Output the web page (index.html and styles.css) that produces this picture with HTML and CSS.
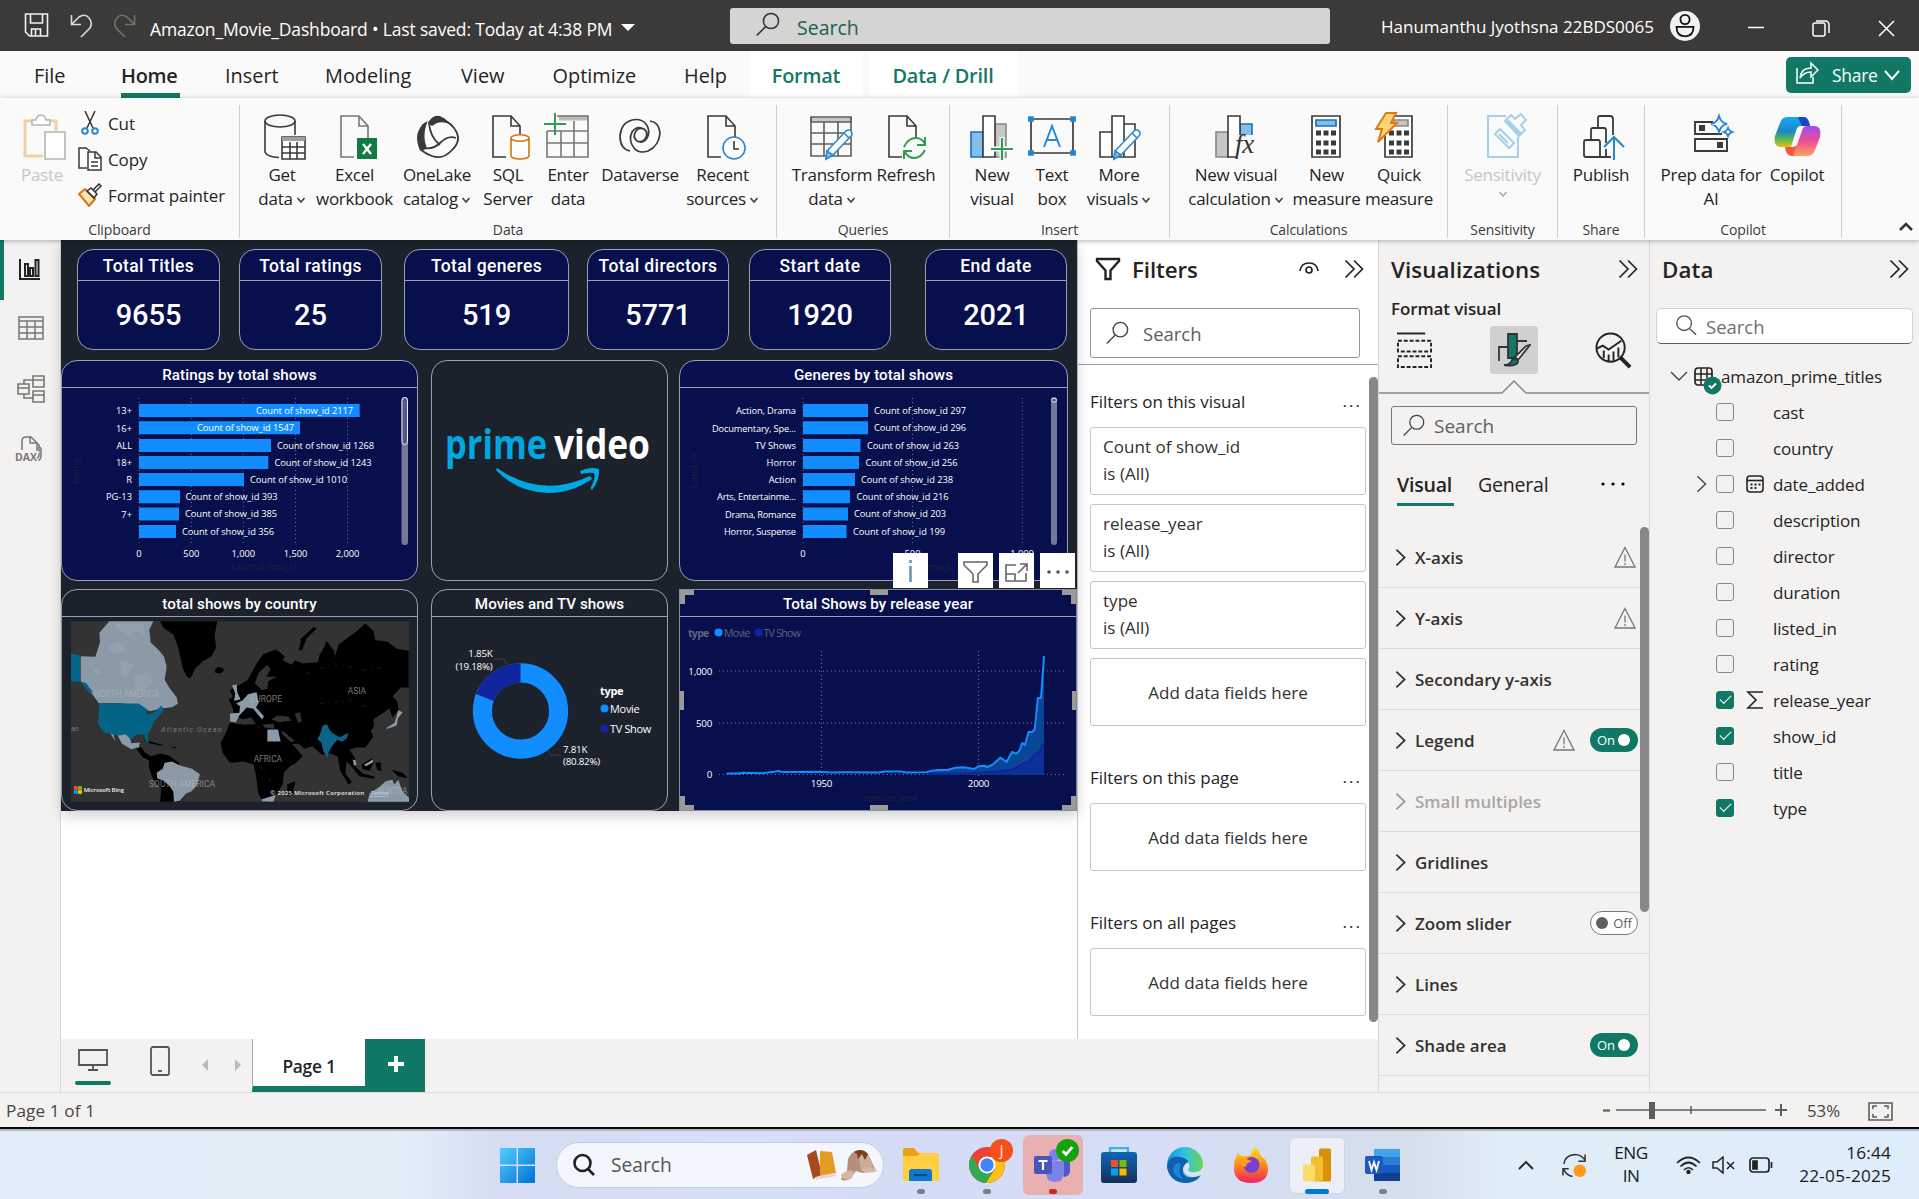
FILE: index.html
```html
<!DOCTYPE html>
<html lang="en">
<head>
<meta charset="utf-8">
<title>Amazon_Movie_Dashboard</title>
<link rel="stylesheet" href="styles.css">
</head>
<body>
<svg class="defs" width="0" height="0">
  <symbol id="mag" viewBox="0 0 24 24"><circle cx="15" cy="9" r="7.6"/><path d="M9.6 14.6L.8 23.4"/></symbol>
  <symbol id="mag-r" viewBox="0 0 24 24"><circle cx="10" cy="10" r="8"/><path d="M16 16l7 6.5"/></symbol>
  <symbol id="dbl" viewBox="0 0 20 20"><path d="M1.5 1.5L10 10l-8.500 8.500M10 1.500L18.500 10 10 18.500"/></symbol>
  <symbol id="chev" viewBox="0 0 12 20"><path d="M1.500 1.500L10.500 10l-9 8.500"/></symbol>
  <symbol id="warn" viewBox="0 0 22 22"><path d="M11 1.500L21 21H1zM11 8.500v7M11 17v2"/></symbol>
  <symbol id="down" viewBox="0 0 10 10"><path d="M1.500 3l3.500 4 3.500-4"/></symbol>
  <symbol id="sheet" viewBox="0 0 44 50"><path d="M20 44H7V3h18l9 10v13M25 3v10h9"/></symbol>
  <symbol id="pencil" viewBox="0 0 30 34"><path d="M3 24L22 4q3-2 5 0 2 3 0 5L9 28l-7 4z" fill="#fff"/><path d="M3 24l6 4-7 4z" fill="#83beec"/><path d="M20 6l5 5"/></symbol>
</svg>

<header class="titlebar">
  <svg class="qa" viewBox="0 0 120 30" fill="none" stroke="#f3f2f1" stroke-width="1.600"><path d="M1.500 4h22v22h-18l-4-4zM6.500 4v9h12V4M7.500 26v-7h9v7M11.500 19v7"/><path d="M47.500 5v9.500H57M48 14l7-7q6-4 10 1t1 10l-9 9" stroke="#dddcda"/><path d="M110.500 5v9.500H101M110 14l-7-7q-6-4-10 1t-1 10l9 9" stroke="#73726f"/></svg>
  <span class="doc">Amazon_Movie_Dashboard • Last saved: Today at 4:38 PM</span>
  <i class="tri"></i>
  <div class="topsearch"><svg fill="none" stroke="#333" stroke-width="1.500"><use href="#mag"/></svg><span>Search</span></div>
  <span class="user">Hanumanthu Jyothsna 22BDS0065</span>
  <svg class="avatar" viewBox="0 0 30 30"><circle cx="15" cy="15" r="15" fill="#f3f2f1"/><g fill="none" stroke="#111" stroke-width="1.800"><circle cx="15" cy="8.500" r="4.600"/><path d="M6.500 15.800h17q0 9.500-8.500 9.500t-8.500-9.500z"/></g></svg>
  <svg class="win" viewBox="0 0 150 20" fill="none" stroke="#fff" stroke-width="1.500"><path d="M1 9.500h16M132 3l15 15M147 3l-15 15"/><rect x="66" y="5" width="12" height="13" rx="2"/><path d="M69 3h9q4 0 4 4v8"/></svg>
</header>

<nav class="tabs">
  <span class="t-file">File</span><span class="t-home on">Home</span><span class="t-insert">Insert</span><span class="t-model">Modeling</span><span class="t-view">View</span><span class="t-opt">Optimize</span><span class="t-help">Help</span><span class="ctx t-fmt">Format</span><span class="ctx t-drill">Data / Drill</span>
  <button class="share"><svg viewBox="0 0 24 24" fill="none" stroke="#fff" stroke-width="1.500"><path d="M2 7v15h16v-6M5 17q1-10 11-10V2l7 7-7 7v-5q-7 0-11 6z"/></svg>Share<svg class="sd" viewBox="0 0 10 10" fill="none" stroke="#fff"><use href="#down"/></svg></button>
</nav>

<section class="ribbon">
  <div class="group g-clip">
    <div class="items">
      <div class="cmd off"><svg viewBox="-1 0 44 50" fill="none" stroke-width="1.600"><path d="M14 8H4v35h18M26 8h9v10" stroke="#f3cfa5" stroke-width="3"/><path d="M11 12V7h4q1-5 5-5t5 5h4v5z" fill="#fff" stroke="#b5b5b5"/><path d="M24 19h20v27H24z" fill="#fff" stroke="#b5b5b5"/></svg><b>Paste</b></div>
      <div class="mini">
        <span><svg viewBox="0 0 24 24" fill="none" stroke="#333" stroke-width="1.500"><path d="M7 0l8 17M17 0L9 17"/><g stroke="#2b88c8" stroke-width="2"><circle cx="7" cy="20" r="2.800"/><circle cx="17" cy="20" r="2.800"/></g></svg>Cut</span>
        <span><svg viewBox="0 0 24 24" fill="#fff" stroke="#3b3a39" stroke-width="1.500"><path d="M9 21H1V1h7l4 3"/><path d="M10 5h8l5 5v13H10zM17 5v6h6M13 15h7M13 19h7"/></svg>Copy</span>
        <span><svg viewBox="0 0 24 24" fill="none" stroke="#333" stroke-width="1.500"><path d="M1 11l6-5 10 10-6 7z" fill="#fbe3b0" stroke="#d9730d" stroke-width="2"/><path d="M9 8l4-3 6 6-3 4zM15 7l6-6 2 2-6 6"/></svg>Format painter</span>
      </div>
    </div><h6>Clipboard</h6>
  </div>
  <div class="group g-data">
    <div class="items">
      <div class="cmd"><svg viewBox="-2 0 44 50" fill="none" stroke="#3b3a39" stroke-width="1.600"><ellipse cx="18" cy="8" rx="15" ry="6"/><path d="M3 8v31q2 5 14 5.500M33 8v14"/><path d="M20 24h23v22H20z" fill="#fff"/><path d="M20 26h23" stroke="#a19f9d" stroke-width="4"/><path d="M20 34h23M20 40h23M28 29v17M35 29v17"/></svg><b>Get</b><b>data<svg class="dn"><use href="#down"/></svg></b></div>
      <div class="cmd"><svg viewBox="-1 0 44 50" fill="none" stroke="#797775" stroke-width="1.600"><use href="#sheet"/><path d="M23 25h20v21H23z" fill="#107c41" stroke="none"/><path d="M29 31l8 10M37 31l-8 10" stroke="#fff" stroke-width="2.400"/></svg><b>Excel</b><b>workbook</b></div>
      <div class="cmd"><svg viewBox="0 0 44 50" fill="none" stroke="#3b3a39" stroke-width="1.800"><path d="M14 10q7-12 18-1-9-2-15 3zM8 12q-9 11-2 25l5-2Q6 24 11 10z" fill="#3b3a39"/><path d="M14 9Q30 3 39 15t-2 22q-9 10-20 6T5 34q12 4 20-4t16-5M14 10q1 14 11 22M10 12Q5 24 9 35"/></svg><b>OneLake</b><b>catalog<svg class="dn"><use href="#down"/></svg></b></div>
      <div class="cmd"><svg viewBox="0 0 44 50" fill="none" stroke="#3b3a39" stroke-width="1.600"><use href="#sheet"/><g stroke="#d9730d" fill="#fff"><path d="M25 25v18q1 3 9 3t9-3V25"/><ellipse cx="34" cy="25" rx="9" ry="3.200"/></g></svg><b>SQL</b><b>Server</b></div>
      <div class="cmd"><svg viewBox="0 0 44 50" fill="none" stroke="#797775" stroke-width="1.600"><path d="M13 5h29" stroke="#bdbbb9" stroke-width="5"/><path d="M11 3h31v41H1V18M1 30h41M1 18h41M15 18v26M28 8v36M1 44h41V3"/><path d="M9 0v22M-2 11h22" stroke="#2f9e50" stroke-width="2"/></svg><b>Enter</b><b>data</b></div>
      <div class="cmd"><svg viewBox="0 -1 44 50" fill="none" stroke="#3b3a39" stroke-width="1.700"><path d="M12 37Q2 35 2 22 3 9 14 6q9-2 14 4 5 7 1 14-4 6-10 3-5-4-1-10 3-4 8-2M32 7q9 1 10 12-1 13-12 18-9 3-14-3-6-8-2-16 5-7 12-3 5 4 1 10-3 4-8 2"/></svg><b>Dataverse</b></div>
      <div class="cmd"><svg viewBox="0 0 44 50" fill="none" stroke="#3b3a39" stroke-width="1.600"><use href="#sheet"/><circle cx="33" cy="35" r="11" fill="#fff" stroke="#2b88d8"/><path d="M33 28v8h5"/></svg><b>Recent</b><b>sources<svg class="dn"><use href="#down"/></svg></b></div>
    </div><h6>Data</h6>
  </div>
  <div class="group g-query">
    <div class="items">
      <div class="cmd"><svg viewBox="0 0 44 50" fill="none" stroke="#605e5c" stroke-width="1.600"><path d="M1 4h40v5H1z" fill="#c8c6c4"/><path d="M41 4v39H1V4M1 20h40M1 31h40M14 9v34M28 9v34"/><svg x="14" y="14" width="30" height="34" stroke="#2b88d8"><use href="#pencil"/></svg></svg><b>Transform</b><b>data<svg class="dn"><use href="#down"/></svg></b></div>
      <div class="cmd"><svg viewBox="2 0 44 50" fill="none" stroke="#3b3a39" stroke-width="1.600"><use href="#sheet"/><path d="M20 26h24v22H20z" fill="#fafafa" stroke="none"/><path d="M22 34q4-9 12-9 6 0 9 6M43 24v8h-8M43 37q-4 8-11 8-6 0-9-6M22 46v-8h8" stroke="#2f9e50" stroke-width="2"/></svg><b>Refresh</b></div>
    </div><h6>Queries</h6>
  </div>
  <div class="group g-ins">
    <div class="items">
      <div class="cmd"><svg viewBox="1 0 44 50" fill="none" stroke="#3b3a39" stroke-width="1.600"><path d="M2 19h12v25H2z" fill="#83beec" stroke="#1a6fb8"/><path d="M26 11h11v33H26z" fill="#c8c6c4" stroke="#8a8886"/><path d="M14 3h12v41H14z" fill="#fff"/><path d="M33 24v24M21 36h23" stroke="#fafafa" stroke-width="5"/><path d="M33 25v22M22 36h22" stroke="#2f9e50" stroke-width="2.200"/></svg><b>New</b><b>visual</b></div>
      <div class="cmd"><svg class="wide" viewBox="0 0 48 50" fill="none" stroke="#3b3a39" stroke-width="1.700"><path d="M3 6h42v34H3z"/><path d="M16 34l8-21 8 21M19 27h10" stroke="#2b88d8" stroke-width="2"/><path d="M1 4h4v4H1zM43 4h4v4h-4zM1 38h4v4H1zM43 38h4v4h-4z" fill="#1f86d0" stroke="#1f86d0"/></svg><b>Text</b><b>box</b></div>
      <div class="cmd"><svg viewBox="-1 0 44 50" fill="#fff" stroke="#3b3a39" stroke-width="1.600"><path d="M2 19h12v25H2zM26 11h11v33H26zM14 3h12v41H14z"/><svg x="14" y="14" width="30" height="34" stroke="#2b88d8"><use href="#pencil"/></svg></svg><b>More</b><b>visuals<svg class="dn"><use href="#down"/></svg></b></div>
    </div><h6>Insert</h6>
  </div>
  <div class="group g-calc">
    <div class="items">
      <div class="cmd"><svg viewBox="0 0 44 50" fill="none" stroke="#3b3a39" stroke-width="1.600"><path d="M2 19h12v25H2z" fill="#c8c6c4" stroke="#8a8886"/><path d="M26 11h12v14H26z" fill="#83beec" stroke="#1a6fb8"/><path d="M14 3h12v41H14z" fill="#fff"/><path d="M22 22h22v26H22z" fill="#fafafa" stroke="none"/><text x="21" y="40" class="fx">fx</text></svg><b>New visual</b><b>calculation<svg class="dn"><use href="#down"/></svg></b></div>
      <div class="cmd"><svg viewBox="0 0 44 50" fill="#fff" stroke="#3b3a39" stroke-width="1.700"><path d="M8 3h28v41H8z"/><path d="M12 7h20v6H12z" fill="#83beec" stroke="#1a6fb8"/><path d="M12 20h20M12 30h20M12 39h20" stroke-width="5" stroke-dasharray="5 2.500"/></svg><b>New</b><b>measure</b></div>
      <div class="cmd"><svg viewBox="3 0 44 50" fill="#fff" stroke="#3b3a39" stroke-width="1.700"><path d="M11 3h27v41H11z"/><path d="M20 7h14v6H20z" fill="#c8c6c4" stroke="#8a8886"/><path d="M15 20h20M15 30h20M15 39h20" stroke-width="5" stroke-dasharray="5 2.500"/><path d="M12 0h10l-5 10h6L4 29l4-13H2z" fill="#fbd77a" stroke="#e07a10" stroke-width="2"/></svg><b>Quick</b><b>measure</b></div>
    </div><h6>Calculations</h6>
  </div>
  <div class="group g-sens">
    <div class="items">
      <div class="cmd off"><svg viewBox="-2 0 44 50" fill="#fafafa" stroke="#a6d0e9" stroke-width="2"><path d="M23 3H5v41h30V24"/><path d="M12 21l5-5 14 14-5 5zM16 21l9 9M22 8l6-6 4 4 6-5 5 6-5 5 4 5-6 6z"/><path d="M24 8l13 13" stroke-width="4"/></svg><b>Sensitivity</b><b><svg class="dn"><use href="#down"/></svg></b></div>
    </div><h6>Sensitivity</h6>
  </div>
  <div class="group g-share">
    <div class="items">
      <div class="cmd"><svg viewBox="-1 0 44 50" fill="none" stroke="#3b3a39" stroke-width="1.800"><path d="M31 44H6q-2 0-2-2V29q0-2 2-2h12q2 0 2 2v15M11 26V17q0-2 2-2h11q2 0 2 2v13M18 14V5q0-2 2-2h10q3 0 3 3v16M26 36v8"/><path d="M34 47V24M24 34l10-10 10 10" stroke="#2488c8" stroke-width="2"/></svg><b>Publish</b></div>
    </div><h6>Share</h6>
  </div>
  <div class="group g-cop">
    <div class="items">
      <div class="cmd"><svg viewBox="-2 0 44 50" fill="none" stroke="#3b3a39" stroke-width="1.900"><path d="M22 9H4v12h27M4 26h32v12H4z"/><path d="M8 12h6v6H8zM26 29h6v6h-6z" fill="#3b3a39" stroke="none"/><path d="M28 3q2 7 8 8-6 1-8 8-2-7-8-8 6-1 8-8zM37 15q1 3 4 4-3 1-4 4-1-3-4-4 3-1 4-4z" stroke="#2b88d8"/></svg><b>Prep data for</b><b>AI</b></div>
      <div class="cmd"><svg class="wide" viewBox="0 0 48 50"><defs><linearGradient id="c1" x2="0" y2="1"><stop offset="0" stop-color="#16a9f2"/><stop offset=".45" stop-color="#1b86c8"/><stop offset=".7" stop-color="#58b755"/><stop offset="1" stop-color="#ffc10a"/></linearGradient><linearGradient id="c2" x2="0" y2="1"><stop offset="0" stop-color="#a04cf0"/><stop offset=".5" stop-color="#ee4f97"/><stop offset="1" stop-color="#ffa05c"/></linearGradient></defs><path d="M14 4h17q4 0 6 8l-9 1q-4 0-5 5l-5 16q-1 3-6 0H8q-8 0-6-11l5-13q2-6 7-6z" fill="url(#c1)"/><path d="M25 4h6q4 0 6 9h-8z" fill="#1846c4"/><path d="M34 43H18q-5 0-6-9h9q3 0 4-5l5-14q1-2 4-2h7q8 0 6 11l-5 13q-2 6-8 6z" fill="url(#c2)"/><path d="M12 34h8q3 0 4-3l-4 12q-6 0-8-9z" fill="#f0593a"/></svg><b>Copilot</b></div>
    </div><h6>Copilot</h6>
  </div>
  <svg class="collapse" viewBox="0 0 14 10" fill="none" stroke="#333" stroke-width="2.500"><path d="M1 8l6-6 6 6"/></svg>
</section>

<main>
  <aside class="rail">
    <div class="sel"><svg viewBox="-1 0 28 28" fill="none" stroke="#222" stroke-width="2"><path d="M3 3v20h20M8 20V8h3v12zM13 20v-8h3v8zM18.500 20V4h3v16z"/></svg></div>
    <div><svg viewBox="-1 2 28 28" fill="none" stroke="#797775" stroke-width="1.500"><path d="M2 3h24v22H2zM2 7h24M2 13h24M2 19h24M10 7v18M18 7v18"/></svg></div>
    <div><svg viewBox="-1 1 28 28" fill="none" stroke="#797775" stroke-width="1.600"><path d="M16 1h11v11H16zM16 16h11v11H16zM16 5h11M16 20h11M1 9h11v10H1zM1 13h11M7 9V5h9M7 19v4h9"/></svg></div>
    <div><svg viewBox="1 1 28 28" fill="none" stroke="#797775" stroke-width="1.500"><path d="M7 15V6q0-4 4-4h5l6 6v8M15 2v6h7M22 8l2 2v10q0 3-3 4M25 12l1 2v7q0 4-4 5"/><text x="0" y="26" class="dax">DAX</text></svg></div>
  </aside>

  <div class="center">
    <div class="workspace">
      <div class="report">
        <div class="canvas">
          <div class="kpis">
            <div class="kpi"><h3>Total Titles</h3><p>9655</p></div>
            <div class="kpi"><h3>Total ratings</h3><p>25</p></div>
            <div class="kpi"><h3>Total generes</h3><p>519</p></div>
            <div class="kpi"><h3>Total directors</h3><p>5771</p></div>
            <div class="kpi"><h3>Start date</h3><p>1920</p></div>
            <div class="kpi"><h3>End date</h3><p>2021</p></div>
          </div>
          <div class="visuals">
            <div class="panel navy"><h4>Ratings by total shows</h4>
              <svg class="chart" viewBox="62 388 355 192">
                <g class="grid"><path d="M139 398v148M191.300 398v148M243.300 398v148M295.500 398v148M347.500 398v148"/></g>
                <g class="bars"><path d="M139 404h220.700v13H139zM139 421.300h161v13H139zM139 439h132v13H139zM139 456h129.300v13H139zM139 473h105v13H139zM139 490.300h41v13H139zM139 507.500h40v13H139zM139 525h37v13H139z"/></g>
                <g class="end"><text x="132" y="414">13+</text><text x="132" y="432">16+</text><text x="132" y="449">ALL</text><text x="132" y="466">18+</text><text x="132" y="483">R</text><text x="132" y="500">PG-13</text><text x="132" y="518">7+</text></g>
                <g><text x="256" y="414" textLength="97">Count of show_id 2117</text><text x="197" y="431" textLength="97">Count of show_id 1547</text><text x="277" y="449" textLength="97">Count of show_id 1268</text><text x="274.500" y="466" textLength="97">Count of show_id 1243</text><text x="250" y="483" textLength="97">Count of show_id 1010</text><text x="185.500" y="500" textLength="92">Count of show_id 393</text><text x="185" y="517" textLength="92">Count of show_id 385</text><text x="182" y="535" textLength="92">Count of show_id 356</text></g>
                <g class="mid"><text x="139" y="557">0</text><text x="191.300" y="557">500</text><text x="243.300" y="557">1,000</text><text x="295.500" y="557">1,500</text><text x="347.500" y="557">2,000</text><text x="264" y="570" textLength="65" class="dim">Count of show_id</text><text transform="translate(79 471) rotate(-90)" class="dim">rating</text></g>
                <rect x="401.500" y="397" width="6.500" height="148" rx="3" fill="#74799b"/><rect x="402" y="397.500" width="5.500" height="47" rx="3" fill="#545a86" stroke="#fff" stroke-width=".9"/>
              </svg></div>
            <div class="panel logo"><svg viewBox="432 361 235 219">
                <text x="445" y="459" class="brand blue" textLength="102" lengthAdjust="spacingAndGlyphs">prime</text><text x="554" y="459" class="brand" textLength="96" lengthAdjust="spacingAndGlyphs">video</text>
                <path d="M497 468q44 31 93 8l2 3q-20 14-44 14-32-1-52-23z" fill="#00a8e1"/><path d="M580 471q10-5 19-2 1 11-7 21-2-1-1-3 5-9 3-14-5-1-13 1z" fill="#00a8e1"/></svg></div>
            <div class="panel navy"><h4>Generes by total shows</h4>
              <svg class="chart" viewBox="680 388 387 192">
                <g class="grid"><path d="M803 398v148M912.500 398v148M1022.300 398v148"/></g>
                <g class="bars"><path d="M803 404h65v13h-65zM803 421.300h65v13h-65zM803 439h57.500v13H803zM803 456h56v13h-56zM803 473h52v13h-52zM803 490.300h47v13h-47zM803 507.500h45v13h-45zM803 525h43.500v13H803z"/></g>
                <g class="end"><text x="796" y="414" textLength="60">Action, Drama</text><text x="796" y="432" textLength="84">Documentary, Spe...</text><text x="796" y="449" textLength="41">TV Shows</text><text x="796" y="466">Horror</text><text x="796" y="483">Action</text><text x="796" y="500" textLength="79">Arts, Entertainme...</text><text x="796" y="518" textLength="71">Drama, Romance</text><text x="796" y="535" textLength="72">Horror, Suspense</text></g>
                <g><text x="874" y="414" textLength="92">Count of show_id 297</text><text x="874" y="431" textLength="92">Count of show_id 296</text><text x="867" y="449" textLength="92">Count of show_id 263</text><text x="865.500" y="466" textLength="92">Count of show_id 256</text><text x="861" y="483" textLength="92">Count of show_id 238</text><text x="856.500" y="500" textLength="92">Count of show_id 216</text><text x="854" y="517" textLength="92">Count of show_id 203</text><text x="853" y="535" textLength="92">Count of show_id 199</text></g>
                <g class="mid"><text x="803" y="557">0</text><text x="912.500" y="557">500</text><text x="1022" y="557">1,000</text><text x="921" y="570" textLength="65" class="dim">Count of show_id</text><text transform="translate(697 471) rotate(-90)" class="dim">listed_in</text></g>
                <rect x="1051" y="397" width="6" height="148" rx="3" fill="#74799b"/><rect x="1051.500" y="398.500" width="5" height="3.500" rx="1.700" fill="#545a86" stroke="#fff" stroke-width=".8"/>
              </svg></div>
            <div class="panel"><h4>total shows by country</h4>
              <svg class="map" viewBox="213 123 1014 542">
                <path fill="#333333" d="M213 123h1014v542H213z"/>
                <g fill="#000">
                  <path d="M480 123h172l-8 40 4 40-14 26-26 14-22 22-14 28-10-2-14-26-8-40-6-26-14-36-30-20z"/>
                  <path d="M645 268l10-8 14 4 3 8-12 8-14-2z"/>
                  <path d="M408 505l16-3 10 14 18 12 30-8 24 6 16 12 14 8 2 20 10 90-10 9h-58l4-40-26-30-12-36 2-18-20-10z"/>
                  <path d="M430 478l34 10 24 6-4 3-34-8zM512 500l18 1-6 4z"/>
                  <path d="M690 428l28 4 18-4 24 4 22 14 20 0 32 4 10 34 16 32 34-2-16 36-26 26-4 36-24 40-14 12-22 2-14-30-6-50-8-34-30-8-40 4-22-30-6-30 16-30z"/>
                  <path d="M742 300l28-50 20-28 38-14 26 20-6 12 26 14 12-14 22 10 46-4 4-20 14-24 8-20 22 30 2 18 12-36 28-22 22-16 30-26 24 22 6 28 36 4 28 22 36 6v110h-24l-24 26 14 16 4 26-18 22-10-28-18 14-30 20 2 20-10 14 8 18-24 32-28 0-20 6 18 28-8 24-18-16-4 36 20 26-10 8-26-44-6-40-22-10-26 4-30-26-22 8-20-16-18 2 12 12 20 24-22 22-32 16-10-20-26-46-8-26-28-2-8-16 6-14-22-8-18 6-14-24-22-6-6-28-12-24 12-8-8-20z"/>
                  <path d="M1038 540l12 2 38 38 36 10-2 6-44-8zM1086 552l30-18 6 12-14 26-22-6zM1126 548l16-2 2 26-12-2zM1174 568l34 10 16 16-30-6z"/>
                  <path d="M896 210l8-36 38-34 8 6-30 28-14 36zM862 612l24-8-8 36-16 8z"/>
                </g>
                <g fill="#333333"><path d="M764 310l12-32 26-24 10 12-12 24 30 0-26 14-2 22-16 4-12-12zM814 418l18-12 34 4 8 12-36 4zM884 400l16-4 6 28-12 4zM786 434l34-4 4 16-30-4zM842 450l14 8 28 24-10 4-26-22zM712 420l42-8 14 20-40 2z"/></g>
                <g fill="none" stroke="#151515" stroke-width="4" stroke-dasharray="10 14 4 16"><path d="M920 280l80-30 90 20 60-10M960 370l90-10 70 30M780 560l30 40-10 30"/></g>
                <g fill="#8b9aa6">
                  <path d="M328 123h132l-12 26 4 38 22 20 18 22 8 30-6 40 14 24 22 28 4 20-18 10-34 4-32 8-22-10-62-14-70 0-16-22-20-26-18-16V228l44 2 14-44-2-28z"/>
                  <path d="M322 445l46 4 20 20 6 20 26-2-4 14-22 6-28-16-16-30-14-14 10 36z"/>
                  <path d="M470 578l18-12 6-18 22-4 24 12 36 10 24 16-10 34-16 18-16 6-18 22-18 3-2-30-12-18-18-16-18-6z"/>
                  <path d="M690 400l28-2 2-20-12-8 20-10 16-18 26-6 6 32-8 14 24 26-6 10-26-32-20-4-22 24-10 20-18-2z"/>
                  <path d="M696 316l14-4 2 24 10 22-20 4 4-22zM802 448h32l8 36h-40zM1158 444l26-16 6-20 4-18 14 6-14 18-4 22-28 10zM1058 538l8 2 4 14-8 2zM1092 554l26-16 2 8-22 12zM784 658l44-14-8 21-34-1zM1103 665l6-26 28-18 20-18 20-4 6 14 12-14 12 34 20 20v12z"/>
                </g>
                <g fill="#9aacb8" opacity=".4"><path d="M340 130l90 0 4 34-30-14-12 24-30-18zM320 200l40-18 22 30-38 10zM400 290l40-14 20 28-26 30-30-8zM360 240l40 14-22 40-14-14zM270 250l40 30-20 6z"/></g>
                <path fill="#056488" d="M213 219l28 8v76l18 6 20 28-12 0-26-32-28-2zM298 370h118l24 16 0 18 24-8 20-20 6 10-4 12-24 26-10 24-10 14 4 26-8-4-6-22-24 2-14 14-18-16-18 4-44-8-20-26z"/>
                <path fill="#0d6388" d="M968 436l14-3 6 16 12 12 20 10 26-14-6 18-14 10-14-6-12 14-12 18-6 22-12-20-6-26-12-10 8-14z"/>
                <g class="geo"><text x="282" y="351" textLength="196">NORTH AMERICA</text><text x="751" y="365" textLength="95">EUROPE</text><text x="1043" y="342" textLength="55">ASIA</text><text x="761" y="546" textLength="85">AFRICA</text><text x="447" y="622" textLength="198">SOUTH AMERICA</text><text x="1132" y="641" textLength="90">AUSTRA</text></g>
                <g class="sea"><text x="483" y="457" textLength="182">Atlantic Ocean</text><text x="213" y="453">an</text></g>
                <path fill="#f25022" d="M222 618h11v11h-11z"/><path fill="#7fba00" d="M234 618h12v11h-12z"/><path fill="#00a4ef" d="M222 630h11v11h-11z"/><path fill="#ffb900" d="M234 630h12v11h-12z"/>
                <text x="251" y="637" class="ms" textLength="121">Microsoft Bing</text><text x="811" y="645" class="ms" textLength="281">© 2025 Microsoft Corporation</text><text x="1112" y="645" class="ms terms" textLength="54">Terms</text>
              </svg></div>
            <div class="panel"><h4>Movies and TV shows</h4>
              <svg class="chart" viewBox="432 617 235 193">
                <circle cx="520.500" cy="711" r="38.100" fill="none" stroke="#118dff" stroke-width="19.100"/>
                <path d="M520.500 672.900A38.100 38.100 0 0 0 484.900 697.500" fill="none" stroke="#12239e" stroke-width="19.100"/>
                <path d="M494 659h10l2 5M548 751l3 4h10" fill="none" stroke="#3b414b"/>
                <g class="big"><g class="end"><text x="492.500" y="657">1.85K</text><text x="492.500" y="670" textLength="37">(19.18%)</text></g><text x="563" y="753">7.81K</text><text x="563" y="765" textLength="37">(80.82%)</text></g>
                <g class="leg"><text x="600" y="695" class="b">type</text><text x="610" y="713">Movie</text><text x="610" y="733" textLength="41">TV Show</text></g>
                <circle cx="604.500" cy="708.500" r="4" fill="#118dff"/><circle cx="604.500" cy="728.500" r="4" fill="#12239e"/>
              </svg></div>
            <div class="panel navy picked"><h4>Total Shows by release year</h4>
              <svg class="chart" viewBox="680 617 396 193">
                <g class="grid"><path d="M821.500 651v125M978.500 651v125M719 671h346M719 723h346M719 774.500h346"/></g>
                <path d="M926 774.500L938.500 770H947L955 767.700 964 767.300 974 769 978.500 766.300 984 765.700 988 767 993 764.300 1000.300 757.700 1006.600 762 1012 752 1016 753.700 1019.300 751 1022.200 743 1025 745 1028.500 732H1032.300L1034.800 729 1037.800 698H1041L1044 656V774.500z" fill="#0b4596"/>
                <path d="M963 774.500L997 771.500 1010 770 1018.400 766.700 1022.600 764 1028.500 762 1034 755 1040 751.500 1044 742V774.500z" fill="#0d3199"/>
                <path d="M928 774L963 773.500 980 772.500 997 771.500 1010 770 1018.400 766.700 1022.600 764 1028.500 762 1034 755 1040 751.500 1044 742" fill="none" stroke="#12239e" stroke-width="2"/>
                <path d="M726.500 773.500L740 773.500 743 772.800 762 773.200 774 771.700 778.500 771 782 772 820 771.700 830 772.500 845 772.300 879 772.500 885 771.500 901 771.500 906 772.500 926 772.300 932 770.800 938.500 770H947L955.300 767.700 963.700 767.300 974 769 978.500 766.300 984 765.700 987.700 767 993 764.300 1000.300 757.700 1006.600 762 1012 752 1016 753.700 1019.300 751 1022.200 743 1025 745 1028.500 732H1032.300L1034.800 729 1037.800 698H1041L1044 656" fill="none" stroke="#118dff" stroke-width="2" stroke-linejoin="round"/>
                <g class="big"><g class="end"><text x="712" y="674.500">1,000</text><text x="712" y="726.500">500</text><text x="712" y="778">0</text></g><g class="mid"><text x="821.500" y="787">1950</text><text x="978.500" y="787">2000</text><text x="891" y="801" class="dim">release_year</text></g></g>
                <g class="leg grey"><text x="688" y="636.500" class="b" textLength="21">type</text><text x="724" y="636.500" textLength="26">Movie</text><text x="763.500" y="636.500" textLength="37">TV Show</text></g>
                <circle cx="718.500" cy="632.500" r="4" fill="#118dff"/><circle cx="758.500" cy="632.500" r="4" fill="#12239e"/>
              </svg>
              <svg class="handles" viewBox="0 0 398 222"><path d="M0 0h15v6H6v9H0zM398 0h-15v6h9v9h6zM0 222h15v-6H6v-9H0zM398 222h-15v-6h9v-9h6zM191 0h18v6h-18zM191 216h18v6h-18zM0 102h5v19H0zM393 102h5v19h-5z" fill="#9a9a9a"/></svg>
            </div>
          </div>
          <div class="vtools">
            <i class="info"><svg viewBox="0 0 35 35" stroke="#6a93c4" stroke-width="2.600"><path d="M17.500 7v3M17.500 13v16"/></svg></i>
            <i><svg viewBox="0 0 35 35" fill="none" stroke="#666" stroke-width="1.600"><path d="M6 9h23v3l-9 9v8h-5v-8l-9-9z"/></svg></i>
            <i><svg viewBox="0 0 35 35" fill="none" stroke="#666" stroke-width="1.600"><path d="M17 12H7v16h20v-8M7 21h9v7M19 20l9-9M21 11h7v7"/></svg></i>
            <i><svg viewBox="0 0 35 35" fill="#555"><circle cx="9" cy="19" r="1.800"/><circle cx="18" cy="19" r="1.800"/><circle cx="27" cy="19" r="1.800"/></svg></i>
          </div>
        </div>
      </div>

      <aside class="filters">
        <div class="fhead"><svg class="funnel" viewBox="0 0 26 24" fill="none" stroke="#252423" stroke-width="2.400"><path d="M2 2h22v2l-8.500 9.500V22h-5v-8.500L2 4z"/></svg><h2>Filters</h2><svg class="eye" viewBox="0 0 20 14" fill="none" stroke="#252423" stroke-width="1.700"><path d="M1 10Q2 2 10 2t9 8"/><circle cx="10" cy="9" r="3"/></svg><svg class="dbl"><use href="#dbl"/></svg></div>
        <div class="box fsearch"><svg><use href="#mag"/></svg>Search</div>
        <hr>
        <div class="flist">
          <h5>Filters on this visual<em>...</em></h5>
          <div class="card">Count of show_id<br>is (All)</div><div class="card">release_year<br>is (All)</div><div class="card">type<br>is (All)</div><div class="card add">Add data fields here</div>
          <h5 class="next">Filters on this page<em>...</em></h5><div class="card add">Add data fields here</div>
          <h5 class="next">Filters on all pages<em>...</em></h5><div class="card add">Add data fields here</div>
          <i class="bar"></i>
        </div>
      </aside>
    </div>
    <footer class="pages">
      <div class="dev"><svg viewBox="0 0 30 22" fill="none" stroke="#555" stroke-width="1.800"><path d="M1 1h28v15H1zM15 16v5M10 21h10"/></svg><u></u></div>
      <svg class="phone" viewBox="0 0 20 30" fill="none" stroke="#555" stroke-width="1.800"><rect x="1" y="1" width="18" height="28" rx="2"/><path d="M8 25h4"/></svg>
      <i class="pl"></i><i class="pr"></i>
      <div class="ptab">Page 1</div><div class="plus"><svg viewBox="0 0 18 18" stroke="#fff" stroke-width="4"><path d="M9 1v16M1 9h16"/></svg></div>
    </footer>
  </div>

  <aside class="viz">
    <div class="phead"><h2>Visualizations</h2><svg class="dbl"><use href="#dbl"/></svg></div>
    <h3>Format visual</h3>
    <div class="modes">
      <span><svg viewBox="0 0 38 38" fill="none" stroke="#252423" stroke-width="2"><path d="M1 1.500h29"/><path d="M2 9h34v11H2zM2 25h34v11H2z" stroke-dasharray="4 2"/></svg></span>
      <span class="sel"><svg viewBox="0 0 34 36" fill="none" stroke="#333" stroke-width="1.800"><path d="M2 29V15h9M20 9h10"/><path d="M11 2h9v24h-9z" fill="#117865"/><path d="M33 13L21 28l-3-3 11-11z" fill="#f3f2f1"/><path d="M7 33q6 0 8-5 4-3 6 1 0 6-14 4z" fill="#117865"/></svg></span>
      <span><svg viewBox="0 0 38 38" fill="none" stroke="#252423" stroke-width="2"><circle cx="16" cy="16" r="14.500"/><path d="M2 17l6-3 6 4 13-9M9 19v8M14 23v7M19 20v9M24 16v10"/><path d="M26 26l10 10" stroke-width="4"/></svg></span>
    </div>
    <svg class="notch" viewBox="0 0 271 14" fill="none" stroke="#8a8886" stroke-width="1.500"><path d="M0 13h123l12-12 12 12h124"/></svg>
    <div class="box vsearch"><svg><use href="#mag"/></svg>Search</div>
    <div class="vtabs"><b>Visual</b><span>General</span><svg viewBox="0 0 24 4"><circle cx="2" cy="2" r="1.600"/><circle cx="12" cy="2" r="1.600"/><circle cx="22" cy="2" r="1.600"/></svg></div>
    <ul class="props">
      <li><svg class="ch"><use href="#chev"/></svg>X-axis<svg class="wn"><use href="#warn"/></svg></li>
      <li><svg class="ch"><use href="#chev"/></svg>Y-axis<svg class="wn"><use href="#warn"/></svg></li>
      <li><svg class="ch"><use href="#chev"/></svg>Secondary y-axis</li>
      <li><svg class="ch"><use href="#chev"/></svg>Legend<svg class="wn"><use href="#warn"/></svg><span class="tog">On</span></li>
      <li class="dis"><svg class="ch"><use href="#chev"/></svg>Small multiples</li>
      <li><svg class="ch"><use href="#chev"/></svg>Gridlines</li>
      <li><svg class="ch"><use href="#chev"/></svg>Zoom slider<span class="tog no">Off</span></li>
      <li><svg class="ch"><use href="#chev"/></svg>Lines</li>
      <li><svg class="ch"><use href="#chev"/></svg>Shade area<span class="tog">On</span></li>
    </ul>
    <i class="bar"></i>
  </aside>

  <aside class="data">
    <div class="phead"><h2>Data</h2><svg class="dbl"><use href="#dbl"/></svg></div>
    <div class="dsearch"><svg><use href="#mag-r"/></svg>Search</div>
    <div class="table"><svg class="dch" viewBox="0 0 18 10" fill="none" stroke="#444" stroke-width="1.400"><path d="M1 1l8 8 8-8"/></svg><svg class="tb" viewBox="0 0 28 28"><rect x="1" y="1" width="17" height="17" rx="3" fill="none" stroke="#252423" stroke-width="1.700"/><path d="M7 1v17M13 1v17M1 7h17M1 13h17" stroke="#252423" stroke-width="1.500"/><circle cx="18.500" cy="18.500" r="9" fill="#117865"/><path d="M15 18.500l2.500 2.500 4.500-4.500" fill="none" stroke="#fff" stroke-width="1.800"/></svg>amazon_prime_titles</div>
    <ul class="fields">
      <li><i></i>cast</li><li><i></i>country</li>
      <li><svg class="fc" viewBox="0 0 12 20" fill="none" stroke="#444" stroke-width="1.500"><use href="#chev"/></svg><i></i><svg class="ic" viewBox="0 0 18 18" fill="none" stroke="#252423" stroke-width="1.600"><rect x="1" y="1" width="16" height="16" rx="3"/><path d="M1 5.500h16"/><path d="M4.500 9.500h10M4.500 13h6" stroke-width="2" stroke-dasharray="2 2"/></svg>date_added</li>
      <li><i></i>description</li><li><i></i>director</li><li><i></i>duration</li><li><i></i>listed_in</li><li><i></i>rating</li>
      <li><i class="ck"></i><svg class="ic" viewBox="0 0 18 18" fill="none" stroke="#252423" stroke-width="1.600"><path d="M17 1H2l8 8-8 8h15"/></svg>release_year</li>
      <li><i class="ck"></i>show_id</li><li><i></i>title</li><li><i class="ck"></i>type</li>
    </ul>
  </aside>
</main>

<div class="status"><span>Page 1 of 1</span>
  <svg class="zoomer" viewBox="0 0 186 20" stroke="#605e5c" fill="none"><path d="M1 10.500h7" stroke-width="2.200"/><path d="M14 10h150M89 6v8" stroke-width="1.500"/><path d="M50 2v17" stroke-width="6"/><path d="M173 10h12M179 4v12" stroke-width="2"/></svg>
  <span class="pct">53%</span>
  <svg class="fit" viewBox="0 0 25 19" stroke="#605e5c" fill="none" stroke-width="1.600"><path d="M1 1h23v17H1zM5 7V4h4M16 4h4v3M20 12v3h-4M9 15H5v-3"/></svg>
</div>

<footer class="taskbar">
  <svg class="start" viewBox="0 0 35 35"><defs><linearGradient id="w" x2="1" y2="1"><stop stop-color="#4fd0fb"/><stop offset="1" stop-color="#0370d4"/></linearGradient></defs><path fill="url(#w)" d="M0 1q0-1 1-1h15.500v16.500H0zM18 0h16q1 0 1 1v15.500H18zM0 18h16.500v17H1q-1 0-1-1zM18 18h17v16q0 1-1 1H18z"/></svg>
  <div class="pill"><svg class="pm" viewBox="0 0 22 24" fill="none" stroke="#222" stroke-width="2.600"><circle cx="9.500" cy="10" r="8"/><path d="M15 16l6 6"/></svg><span>Search</span>
    <svg class="art" viewBox="0 0 72 32"><path d="M1 6l9-5 6 25-9 4z" fill="#a54a1c"/><path d="M14 2l12 1 4 21-16 3z" fill="#e59b22"/><path d="M9 28l19-4 2 3-20 4z" fill="#e8d5e0"/><path d="M42 10q4-9 12-9 7 1 10 8l6 13-14 2-6-2-6 8q-7 3-9 0 1-4 6-8z" fill="#b68f7c"/><path d="M52 3q9-3 12 6l4 11-13 2z" fill="#cda996"/><path d="M35 26q6-6 13-4l-2 7q-8 4-11-3zM58 19q10-2 13 3-8 3-15 0z" fill="#d6b6a4"/><path d="M48 3q8-5 14 2l-3 6-3-6-4 5-1-5z" fill="#7b3f1c"/></svg></div>
  <div class="app a1"><svg viewBox="0 0 36 36"><path d="M0 3q0-2 2-2h9l4 5h19q2 0 2 2v24q0 2-2 2H0z" fill="#e8a410"/><path d="M0 9l14 0 4-3h16q2 0 2 2v24q0 2-2 2H0z" fill="#ffce43"/><path d="M6 34V25q0-3 3-3h17q3 0 3 3v9z" fill="#1377c9"/><path d="M11 28h13" stroke="#0a4b87" stroke-width="2"/></svg><u></u></div>
  <div class="app a2"><svg viewBox="0 0 36 36"><circle cx="18" cy="18" r="18" fill="#e94335"/><path d="M2.500 9A18 18 0 0 0 17 36l8-14H11z" fill="#34a853"/><path d="M17 36A18 18 0 0 0 34 10H18l8 12z" fill="#fbc116"/><circle cx="18" cy="18" r="8.500" fill="#fff"/><circle cx="18" cy="18" r="6.700" fill="#4285f4"/></svg><em>j</em><u></u></div>
  <div class="app a3 tile"><svg viewBox="0 0 36 36"><circle cx="21" cy="8" r="6" fill="#7b83eb"/><circle cx="32" cy="12" r="4" fill="#5059c9"/><path d="M28 15h8v9q0 5-6 6z" fill="#5059c9"/><path d="M12 14h18v11q0 10-9 10t-9-10z" fill="#7b83eb"/><rect y="9" width="18" height="18" rx="2" fill="#4b53bc"/><path d="M4.500 14h9M9 14v9" stroke="#fff" stroke-width="2.200"/></svg><em class="ok"><svg viewBox="0 0 24 24" fill="none" stroke="#fff" stroke-width="3"><path d="M7 12.500l3.500 3.500L17 8.500"/></svg></em><u></u></div>
  <div class="app a4"><svg viewBox="0 0 36 36"><defs><linearGradient id="st" x2="0" y2="1"><stop stop-color="#0f66b5"/><stop offset="1" stop-color="#173056"/></linearGradient></defs><path d="M9 6V1h18v5" fill="none" stroke="#31b7ee" stroke-width="2.400"/><rect y="5" width="36" height="31" rx="3" fill="url(#st)"/><path fill="#f25022" d="M10 13h7v7h-7z"/><path fill="#7fba00" d="M18.500 13h7v7h-7z"/><path fill="#00a4ef" d="M10 21.500h7v7h-7z"/><path fill="#ffb900" d="M18.500 21.500h7v7h-7z"/></svg></div>
  <div class="app a5"><svg viewBox="0 0 36 36"><defs><linearGradient id="e1" x2="1" y2="0"><stop stop-color="#1795dc"/><stop offset=".5" stop-color="#33c1e0"/><stop offset="1" stop-color="#69d64b"/></linearGradient></defs><circle cx="18" cy="18" r="18" fill="url(#e1)"/><path d="M0 18Q2 8 14 10q8 2 8 8-7 0-6 8 4 8 18 2-5 8-16 8Q1 34 0 18z" fill="#0f5fb0"/><path d="M14 17q-4 8 2 15-9-2-10-10 2-8 8-5z" fill="#1a85d6"/><path d="M21 15q3 4 0 8 2 3 8 2 6-1 8-7l3 8-6 2q-8 4-15 0-7-7 2-13z" fill="#dbe2f2"/></svg></div>
  <div class="app a6"><svg viewBox="0 0 34 36"><defs><linearGradient id="ff" x2="0" y2="1"><stop stop-color="#ffe226"/><stop offset=".5" stop-color="#ff8a16"/><stop offset="1" stop-color="#f0206b"/></linearGradient></defs><path d="M21 0q5 4 6 9 7 5 7 13 0 14-17 14T0 21Q0 12 4 6l3 3 4 0q6 0 6-2 1-5 4-7z" fill="url(#ff)"/><circle cx="17.500" cy="18" r="8" fill="#7a3fd0"/><path d="M5 12q8-2 13 3-6 0-6 5-6-1-7-8z" fill="#ff9a1c"/></svg></div>
  <div class="app a7 tile"><svg viewBox="0 0 28 33"><rect x="16" width="12" height="33" rx="1.500" fill="#d9910a"/><rect x="8" y="8" width="12" height="25" rx="1.500" fill="#efbf2e"/><rect y="16" width="12" height="17" rx="1.500" fill="#f9dc6a"/></svg><u></u></div>
  <div class="app a8"><svg viewBox="0 0 36 34"><path d="M9 1h26v8H9z" fill="#41a5ee"/><path d="M9 9h26v8H9z" fill="#2b7cd3"/><path d="M9 17h26v8H9z" fill="#185abd"/><path d="M9 25h26v8H9z" fill="#103f91"/><rect y="8" width="18" height="18" rx="2" fill="#185abd"/><path d="M4 13l2.500 9L9 14l2.500 8L14 13" fill="none" stroke="#fff" stroke-width="1.800"/></svg><u></u></div>
  <div class="tray">
    <svg class="up" viewBox="0 0 16 10" fill="none" stroke="#222" stroke-width="1.800"><path d="M1 9l7-7 7 7"/></svg>
    <svg class="sync" viewBox="0 0 26 26" fill="none" stroke="#333" stroke-width="1.600"><path d="M2 12Q3 3 13 2q7 0 11 6M24 2v7h-7M1 24v-7h6M2 18q3 6 9 7"/><circle cx="18.500" cy="19" r="6.500" fill="#ff9a12" stroke="none"/></svg>
    <div class="lang">ENG<br>IN</div>
    <svg class="wifi" viewBox="0 0 25 18" fill="none" stroke="#222" stroke-width="1.700"><path d="M1 7Q12.500-4 24 7M4.500 10.500q8-8 16 0M8 14q4.500-4.500 9 0"/><circle cx="12.500" cy="16" r="1.300" fill="#222"/></svg>
    <svg class="spk" viewBox="0 0 24 18" fill="none" stroke="#222" stroke-width="1.500"><path d="M1 6h4l6-5v16l-6-5H1zM15 6l7 7M22 6l-7 7"/></svg>
    <svg class="bat" viewBox="0 0 24 16" fill="none" stroke="#222" stroke-width="1.700"><rect x="1" y="1" width="19" height="14" rx="3"/><path d="M22.500 5v6"/><path d="M4 4h4v8H4z" fill="#222"/></svg>
    <div class="clock">16:44<br>22-05-2025</div>
  </div>
</footer>
</body>
</html>
```
FILE: styles.css
```css
* { box-sizing: border-box; }
body { margin: 0; width: 1919px; height: 1199px; overflow: hidden; display: flex; flex-direction: column; font-family: "Open Sans", "Noto Sans", sans-serif; color: #252423; background: #f3f2f1; }
h2, h3, h4, h5, h6, p, ul { margin: 0; padding: 0; }
ul { list-style: none; }
svg { flex: none; display: block; }
.defs { position: absolute; }
span, b, h2, h3, h5, h6 { white-space: nowrap; }

/* title bar */
.titlebar { height: 51px; background: #3b3a38; display: flex; align-items: center; color: #fff; padding-left: 24px; flex: none; }
.qa { width: 120px; height: 30px; margin-bottom: 1px; }
.doc { margin: 7px 0 0 6px; width: 471px; font-size: 17.500px; letter-spacing: -.17px; }
.tri { border: 7px solid transparent; border-top-color: #fff; border-bottom: 0; margin-top: 3px; }
.topsearch { margin-left: 95px; width: 600px; height: 36px; background: #d4d4d2; border-radius: 3px; display: flex; align-items: center; color: #1f5f50; font-size: 19.500px; }
.topsearch svg { width: 24px; height: 24px; margin: 0 17px 4px 26px; }
.topsearch span { margin-top: 3px; }
.user { margin: 2px 0 0 51px; width: 273px; font-size: 17px; letter-spacing: 0; }
.avatar { width: 30px; height: 30px; margin-left: 16px; }
.win { width: 150px; height: 20px; margin: 4px 0 0 47px; }

/* ribbon tabs */
.tabs { height: 47px; background: #fafafa; display: flex; flex: none; padding-left: 34px; font-size: 19.900px; line-height: 49px; color: #252423; }
.tabs > span { flex: none; }
.t-file { width: 87px; } .t-home { width: 59px; margin-right: 45px; } .t-insert { width: 100px; } .t-model { width: 136px; } .t-view { width: 91.500px; } .t-opt { width: 131.500px; } .t-help { width: 65.500px; }
.tabs .on { font-weight: 600; letter-spacing: -.3px; border-bottom: 5px solid #117865; }
.tabs .ctx { background: #fff; color: #117865; font-weight: 600; text-align: center; letter-spacing: -.2px; }
.t-fmt { width: 113px; margin-right: 6px; } .t-drill { width: 149px; }
.share { margin: 6px 8px 0 auto; width: 125px; height: 36px; border: 0; border-radius: 5px; background: #117865; color: #fff; font: 17.500px "Open Sans", sans-serif; letter-spacing: -.3px; display: flex; align-items: center; padding: 0 0 0 9px; }
.share svg { width: 24px; height: 24px; margin: 0 13px 4px 0; }
.share .sd { width: 20px; height: 20px; margin: 0 0 0 4px; }

/* ribbon */
.ribbon { height: 142px; background: #fafafa; display: flex; flex: none; position: relative; z-index: 3; box-shadow: 0 1px 5px rgba(0,0,0,.3); }
.group { height: 133px; margin-top: 7px; border-right: 1px solid #d0cfce; display: flex; flex-direction: column; justify-content: space-between; flex: none; }
.group h6 { font-size: 14px; font-weight: 400; text-align: center; line-height: 16px; letter-spacing: -.1px; color: #3b3a39; }
.items { display: grid; justify-items: center; }
.g-clip { width: 240px; } .g-clip .items { grid-template-columns: 76px 160px; justify-items: start; }
.g-clip .cmd { width: 84px; }
.g-data { width: 537px; } .g-data .items { grid-template-columns: 70px 75px 90px 52px 68px 76px 89px; padding-left: 7px; }
.g-query { width: 173px; } .g-query .items { grid-template-columns: 84px 64px; padding-left: 13px; }
.g-ins { width: 220px; } .g-ins .items { grid-template-columns: 60px 60px 74px; padding-left: 12px; }
.g-calc { width: 278px; } .g-calc .items { grid-template-columns: 110px 71px 74px; padding-left: 11px; }
.g-sens { width: 110px; } .g-share { width: 87px; }
.g-cop { width: 197px; } .g-cop .items { grid-template-columns: 106px 66px; padding-left: 13px; }
.cmd { display: flex; flex-direction: column; align-items: center; padding-top: 8px; font-size: 17px; letter-spacing: -.25px; }
.cmd > svg { width: 44px; height: 50px; overflow: visible; }
.cmd > svg.wide { width: 48px; }
.cmd b { font-weight: 400; line-height: 24px; display: flex; align-items: center; }
.dn { width: 10px; height: 10px; margin: 2px 0 0 3px; fill: none; stroke: #444; stroke-width: 1.700; }
.off { color: #c8c6c4; } .off .dn { stroke: #b0aeac; }
.off b:last-child .dn { margin-left: 0; }
.fx { font: italic 27px "Liberation Serif", serif; fill: #333; stroke: none; }
.mini { display: flex; flex-direction: column; padding-left: 2px; }
.mini span { display: flex; align-items: center; height: 36px; font-size: 17px; letter-spacing: -.12px; }
.mini svg { width: 24px; height: 24px; margin-right: 6px; }
.collapse { width: 14px; height: 10px; margin: 124px 6px 0 auto; }

/* main split */
main { height: 852px; flex: none; display: flex; }
.rail { width: 61px; flex: none; border-right: 1px solid #d9d8d7; }
.rail div { height: 60px; display: flex; align-items: center; justify-content: center; }
.rail .sel { border-left: 4px solid #117865; padding-right: 4px; }
.rail svg { width: 28px; height: 28px; overflow: visible; }
.dax { font: bold 10.500px "Open Sans", sans-serif; fill: #797775; stroke: #f3f2f1; stroke-width: 3px; paint-order: stroke; }
.center { width: 1317px; flex: none; }
.workspace { height: 799px; display: flex; }
.report { width: 1016px; background: #fff; }
.canvas { height: 571px; background: #1b222c; padding-top: 9px; position: relative; box-shadow: 0 5px 12px rgba(0,0,0,.18); }
.kpis { display: grid; height: 101px; padding-left: 16px; grid-template-columns: 143px 143px 165px 142px 142px 142px; grid-template-rows: 101px; column-gap: 19px; }
.kpi { border: 1px solid #9a9fb3; border-radius: 16px; background: #070f4c; color: #fff; font-family: Roboto, sans-serif; text-align: center; }
.kpi:nth-child(3) { margin: 0 -3px 0 3px; } .kpi:nth-child(4) { margin: 0 -2px 0 2px; }
.kpi:nth-child(5) { margin: 0 -3px 0 3px; } .kpi:nth-child(6) { margin: 0 -18px 0 18px; }
.kpi h3 { height: 31px; line-height: 32px; border-bottom: 1px solid #9a9fb3; font-size: 17.500px; font-weight: 500; letter-spacing: .38px; white-space: nowrap; }
.kpi p { font-size: 29px; line-height: 69px; font-weight: 500; letter-spacing: -.1px; }
.visuals { display: grid; grid-template-columns: 357px 237px 398px; column-gap: 12px; grid-template-rows: 221px 222px; row-gap: 8px; padding-top: 10px; }
.panel { border: 1px solid #9a9fb3; border-radius: 16px; position: relative; overflow: hidden; }
.visuals .panel:nth-child(2), .visuals .panel:nth-child(5) { margin: 0 -1px 0 1px; }
.visuals .panel:nth-child(3) { width: 389px; }
.navy { background: #070f4c; }
.visuals .picked { border-color: #8a8da0; border-radius: 0; }
.handles { position: absolute; left: -1px; top: -1px; width: 398px; height: 222px; }
.panel h4 { height: 27px; border-bottom: 1px solid #9a9fb3; color: #fff; font: 500 15.200px/28px Roboto, sans-serif; letter-spacing: .05px; text-align: center; white-space: nowrap; }
.chart { width: 100%; font-size: 9.300px; font-weight: 500; fill: #fff; }
.logo svg { width: 235px; height: 219px; }
.map { width: 338px; height: 181px; margin: 4px 0 0 9px; }
.grid path { stroke: #8d92ad; stroke-width: .8; stroke-dasharray: 1 3; fill: none; }
.bars path { fill: #118dff; }
.end text { text-anchor: end; } .mid text { text-anchor: middle; }
.mid .dim { fill: #1c2240; } .big { font-size: 9.800px; letter-spacing: -.25px; } .leg { font-size: 11px; letter-spacing: -.3px; }
.b { font-weight: 700; } .grey { fill: #62647c; font-size: 10.500px; }
.brand { font: 700 41px "Open Sans", sans-serif; fill: #fff; } .blue { fill: #00a8e1; }
.geo { font: 25px Roboto, sans-serif; fill: #b4b8bb; opacity: .65; }
.sea { font: italic 22px Roboto, sans-serif; fill: #77797b; }
.ms { font: 600 18px "Open Sans", sans-serif; fill: #eee; } .terms { fill: #c3cbf5; text-decoration: underline; }
.vtools { position: absolute; left: 832px; top: 313px; display: flex; gap: 6px; }
.vtools i { width: 35px; height: 35px; background: #fff; } .vtools .info { margin-right: 24px; }

/* filters */
.filters { width: 301px; background: #fff; border-left: 1px solid #c8c6c4; }
.fhead { display: flex; align-items: center; height: 58px; padding-left: 17px; }
.funnel { width: 26px; height: 24px; }
h2 { font-size: 22.300px; font-weight: 600; letter-spacing: -.1px; }
.fhead h2 { margin-left: 11px; width: 167px; }
.eye { width: 20px; height: 14px; margin: 0 25px 2px 0; }
.dbl { width: 20px; height: 20px; fill: none; stroke: #252423; stroke-width: 1.700; }
.box { border: 1px solid #979593; border-radius: 3px; display: flex; align-items: center; font-size: 19px; color: #605e5c; }
.box svg { width: 23px; height: 23px; fill: none; stroke: #444; stroke-width: 1.400; }
.fsearch { width: 270px; height: 50px; margin: 10px 0 0 12px; padding-left: 15px; font-size: 18.500px; }
.fsearch svg { margin: 0 14px 2px 0; }
hr { margin: 6px 0 0; border: 0; border-top: 1px solid #a19f9d; }
.flist { padding: 23px 12px 0 12px; position: relative; }
h5 { font-size: 17px; font-weight: 400; height: 39px; line-height: 27px; letter-spacing: -.03px; display: flex; }
h5 em { margin: -1px 4px 0 auto; font-style: normal; letter-spacing: 2px; }
h5.next { margin-top: 38px; } .next + .card { margin-bottom: 0; }
.card { height: 68px; margin-bottom: 9px; border: 1px solid #c8c6c4; border-radius: 3px; padding: 5px 12px; font-size: 17px; line-height: 27px; color: #323130; letter-spacing: .03px; }
.add { text-align: center; line-height: 57px; }
.bar { position: absolute; right: 0; top: 12px; width: 9px; height: 645px; border-radius: 5px; background: #8a8886; }

/* page tabs */
.pages { height: 53px; display: flex; position: relative; }
.dev { margin: 10px 38px 0 14px; width: 36px; } .dev svg { width: 30px; height: 22px; margin-left: 3px; }
.dev u { display: block; height: 4px; margin-top: 10px; border-radius: 2px; background: #117865; }
.phone { width: 20px; height: 30px; margin: 7px 32px 0 1px; }
.pl, .pr { border: 6px solid transparent; height: 12px; margin-top: 20px; }
.pl { border-right-color: #bbb; border-left: 0; } .pr { border-left-color: #bbb; border-right: 0; margin-left: 27px; }
.ptab { margin-left: 11px; width: 113px; background: #fff; border-left: 1px solid #aaa; border-bottom: 6px solid #117865; text-align: center; font-weight: 600; font-size: 17.400px; line-height: 55px; letter-spacing: -.3px; }
.plus { width: 60px; background: #117865; padding: 16px 0 0 22px; } .plus svg { width: 18px; height: 18px; }

/* visualizations */
.viz { width: 271px; flex: none; border-left: 1px solid #d9d8d7; position: relative; overflow: hidden; }
.phead { display: flex; align-items: center; justify-content: space-between; height: 58px; padding: 0 11px 0 12px; }
.phead h2 { letter-spacing: .1px; }
.viz h3 { font-size: 17px; font-weight: 600; margin-left: 12px; line-height: 22px; letter-spacing: -.1px; }
.modes { display: flex; justify-content: space-between; padding: 6px 12px 0 11px; height: 54px; }
.modes span { width: 48px; height: 48px; display: flex; align-items: center; justify-content: center; }
.modes .sel { background: #d2d0ce; border-radius: 3px; }
.modes svg { width: 37px; height: 37px; } .modes .sel svg { width: 34px; height: 36px; }
.notch { width: 271px; height: 14px; margin-top: 6px; }
.vsearch { width: 246px; height: 39px; margin: 12px 0 0 12px; padding-left: 11px; border-color: #797775; }
.vsearch svg { width: 22px; height: 22px; margin: 0 9px 2px 0; }
.vtabs { display: flex; font-size: 19.600px; line-height: 37px; height: 41px; margin: 21px 24px 20px 18px; letter-spacing: -.25px; align-items: flex-start; }
.vtabs b { font-weight: 600; width: 57px; border-bottom: 3px solid #117865; }
.vtabs span { margin-left: 24px; } .vtabs svg { width: 24px; height: 4px; margin: 16px 0 0 auto; }
.props li { height: 61px; border-bottom: 1px solid #dddbda; display: flex; align-items: center; font-size: 17px; font-weight: 600; letter-spacing: 0; padding: 0 11px 0 16px; width: 270px; color: #323130; }
.ch { width: 11px; height: 19px; margin-right: 9px; fill: none; stroke: #333; stroke-width: 1.900; }
.wn { width: 22px; height: 22px; margin-left: auto; margin-right: 2px; fill: none; stroke: #797775; stroke-width: 1.300; }
.tog { width: 48px; height: 24px; border-radius: 12px; background: #117865; color: #fff; font-size: 13px; font-weight: 400; line-height: 24px; padding-left: 7px; margin-left: auto; display: flex; align-items: center; }
.wn + .tog { margin-left: 13px; }
.tog::after { content: ""; width: 12px; height: 12px; border-radius: 6px; background: #fff; margin-left: 3px; }
.no { background: #fff; border: 1px solid #797775; color: #605e5c; flex-direction: row-reverse; padding: 0 5px; justify-content: space-between; }
.no::after { background: #605e5c; margin: 0; }
.props .dis { color: #a8a6a4; } .dis .ch { stroke: #999; }
.viz .bar { top: 287px; height: 385px; }

/* data */
.data { width: 270px; flex: none; border-left: 1px solid #d9d8d7; }
.data .phead { padding: 0 10px 0 12px; }
.dsearch { width: 257px; height: 36px; margin: 10px 0 0 6px; background: #fff; border: 1px solid #d1d1d1; border-bottom-color: #605e5c; border-radius: 5px; display: flex; align-items: center; font-size: 18.500px; color: #707070; }
.dsearch svg { width: 22px; height: 22px; margin: 0 9px 2px 18px; fill: none; stroke: #555; stroke-width: 1.500; }
.table { display: flex; height: 36px; margin-top: 14px; align-items: center; padding-left: 20px; font-size: 17px; letter-spacing: -.13px; }
.dch { width: 18px; height: 10px; margin-right: 6px; } .tb { width: 28px; height: 28px; margin: 9px -1px 0 0; }
.fields li { display: flex; align-items: center; height: 36px; padding-left: 123px; font-size: 17px; letter-spacing: -.13px; position: relative; }
.fields i, .fields .fc, .fields .ic { position: absolute; top: 9px; }
.fields i { left: 66px; width: 18px; height: 18px; border: 1px solid #8a8886; border-radius: 3px; }
.fields .ck { background: #117865; border-color: #117865; }
.ck::after { content: ""; position: absolute; left: 3px; top: 3px; width: 10px; height: 5px; border: solid #fff; border-width: 0 0 1.600px 1.600px; transform: rotate(-45deg); }
.fields .fc { left: 46px; width: 11px; height: 18px; } .fields .ic { left: 96px; width: 18px; height: 18px; }

/* status bar */
.status { height: 37px; flex: none; border-top: 1px solid #dcdbda; border-bottom: 2px solid #0a0a0a; display: flex; align-items: center; padding: 0 26px 0 6px; color: #484644; font-size: 17.200px; letter-spacing: .1px; }
.zoomer { width: 186px; height: 20px; margin-left: auto; } .pct { margin-left: 19px; width: 61px; font-size: 16.800px; letter-spacing: 0; } .fit { width: 25px; height: 19px; margin-top: 2px; }

/* taskbar */
.taskbar { height: 70px; flex: none; position: relative; display: flex; align-items: center; padding: 0 28px 0 500px; border-top: 2px solid #b4b9c6; background: linear-gradient(90deg, #e1edf8 0, #e2eff9 400px, #d6ddf3 500px, #d5dff5 750px, #d4dcf6 900px, #d5def4 1150px, #d5deeb 1400px, #dfedf8 1500px, #deedfa 100%); }
.start { width: 35px; height: 35px; }
.pill { width: 328px; height: 46px; margin-left: 21px; border-radius: 23px; background: #f3f6fd; border: 1px solid #c5cde4; display: flex; align-items: center; font-size: 19.200px; color: #555; }
.pill span { margin-bottom: 2px; }
.pm { width: 22px; height: 24px; margin: 0 16px 0 16px; } .art { width: 72px; height: 32px; margin-left: auto; margin-right: 5px; }
.app { height: 60px; width: 60px; position: relative; display: flex; align-items: center; justify-content: center; border-radius: 6px; flex: none; }
.app > svg { width: 36px; height: 36px; }
.a1 { margin-left: 7px; } .a2, .a4, .a5 { margin-left: 6px; } .a3 { margin-left: 6px; background: #e8b0b0; } .a6 { margin-left: 6px; }
.a7 { margin-left: 8px; width: 56px; height: 57px; background: #eceff7; border: 1px solid #cfd5e6; } .a7 > svg { width: 28px; height: 34px; }
.a8 { margin-left: 8px; width: 60px; }
.a3 > svg { margin-right: 2px; }
.app u { position: absolute; bottom: 1px; left: 50%; width: 8px; height: 5px; margin-left: -4px; border-radius: 3px; background: #7b7f88; }
.a3 u { background: #c42b1c; } .a7 u { width: 24px; margin-left: -12px; background: #0078d4; bottom: -1px; }
.app em { position: absolute; right: 4px; top: 4px; width: 23px; height: 23px; border-radius: 50%; background: #f4511e; color: #fff; font: 14px/22px "Open Sans", sans-serif; text-align: center; }
.app .ok { background: #13a10e; right: 4px; top: 4px; }
.tray { margin-left: auto; display: flex; align-items: center; font-size: 17.200px; line-height: 23.500px; color: #1b1b1b; letter-spacing: .2px; }
.up { width: 16px; height: 10px; margin-right: 28px; } .sync { width: 25px; height: 26px; margin-right: 25px; }
.lang { width: 38px; text-align: center; margin: 0 26px 2px 0; letter-spacing: -.5px; } .wifi { width: 25px; height: 18px; margin-right: 11px; } .spk { width: 24px; height: 18px; margin-right: 13px; } .bat { width: 24px; height: 16px; margin-right: 23px; }
.clock { text-align: right; width: 95px; margin-bottom: 2px; white-space: nowrap; }
```
